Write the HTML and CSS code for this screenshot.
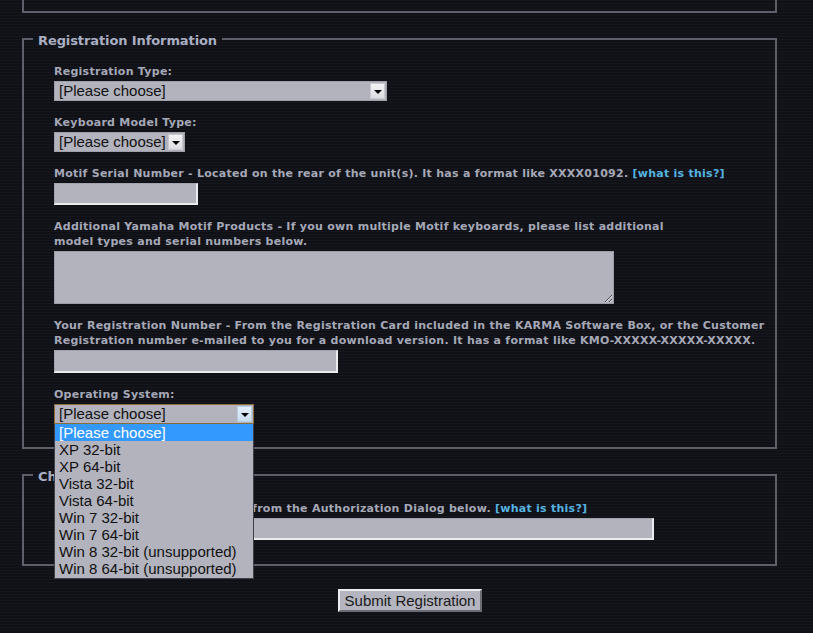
FILE: index.html
```html
<!DOCTYPE html>
<html>
<head>
<meta charset="utf-8">
<title>Registration</title>
<link rel="stylesheet" href="styles.css">
</head>
<body>
<div class="page">
  <div class="top-box"></div>

  <fieldset class="box reg">
    <legend>Registration Information</legend>
    <div class="box-body">
      <div class="field">
        <div class="label">Registration Type:</div>
        <div class="select w-reg"><span class="sel-text">[Please choose]</span><span class="arrow"></span></div>
      </div>
      <div class="field">
        <div class="label">Keyboard Model Type:</div>
        <div class="select w-kbd"><span class="sel-text">[Please choose]</span><span class="arrow"></span></div>
      </div>
      <div class="field">
        <div class="label">Motif Serial Number - Located on the rear of the unit(s). It has a format like XXXX01092. <a class="help" href="#">[what is this?]</a></div>
        <input class="text w-serial" type="text">
      </div>
      <div class="field">
        <div class="label">Additional Yamaha Motif Products - If you own multiple Motif keyboards, please list additional<br>model types and serial numbers below.</div>
        <textarea class="area"></textarea>
      </div>
      <div class="field">
        <div class="label">Your Registration Number - From the Registration Card included in the KARMA Software Box, or the Customer<br>Registration number e-mailed to you for a download version. It has a format like KMO-XXXXX-XXXXX-XXXXX.</div>
        <input class="text w-regnum" type="text">
      </div>
      <div class="field os">
        <div class="label">Operating System:</div>
        <div class="select focused w-os"><span class="sel-text">[Please choose]</span><span class="arrow"></span></div>
        <ul class="dropdown">
          <li class="selected">[Please choose]</li>
          <li>XP 32-bit</li>
          <li>XP 64-bit</li>
          <li>Vista 32-bit</li>
          <li>Vista 64-bit</li>
          <li>Win 7 32-bit</li>
          <li>Win 7 64-bit</li>
          <li>Win 8 32-bit (unsupported)</li>
          <li>Win 8 64-bit (unsupported)</li>
        </ul>
      </div>
    </div>
  </fieldset>

  <fieldset class="box chal">
    <legend>Challenge Code</legend>
    <div class="box-body">
      <div class="field">
        <div class="label">Challenge Code - Enter a code from the Authorization Dialog below. <a class="help" href="#">[what is this?]</a></div>
        <input class="text w-chal" type="text">
      </div>
    </div>
  </fieldset>

  <div class="submit-row">
    <button class="submit" type="button">Submit Registration</button>
  </div>
</div>
</body>
</html>
```

FILE: styles.css
```css
html, body {
  margin: 0;
  padding: 0;
}

body {
  width: 813px;
  height: 633px;
  overflow: hidden;
  background-color: #111217;
  background-image: repeating-linear-gradient(to bottom, #16171c 0, #16171c 1px, #101116 1px, #101116 3px);
  font-family: "DejaVu Sans", Verdana, sans-serif;
  color: #a5a8b6;
}

.page {
  width: 755px;
  margin-left: 22px;
}

.top-box {
  height: 11px;
  border: 2px solid #5d5f6b;
  border-top: none;
}

.box {
  margin: 16px 0 0;
  padding: 0;
  min-width: 0;
  border: 2px solid #5d5f6b;
}

.box.chal {
  margin-top: 16px;
}

.box legend {
  margin-left: 9px;
  padding: 4px 5px 0;
  font-size: 13px;
  line-height: 16px;
  font-weight: bold;
  color: #a9aec2;
  letter-spacing: -0.1px;
}

.box-body {
  padding: 15px 0 23px 30px;
}

.chal .box-body {
  padding-top: 16px;
  padding-bottom: 24px;
}

.field {
  margin-bottom: 14px;
}

.field:last-child {
  margin-bottom: 0;
}

.label {
  font-size: 11px;
  line-height: 15px;
  font-weight: bold;
  letter-spacing: 0.26px;
  margin-bottom: 2px;
  white-space: nowrap;
}

.help {
  color: #55b3e0;
  text-decoration: none;
}

/* select look-alike */
.select {
  box-sizing: border-box;
  height: 20px;
  display: flex;
  align-items: center;
  justify-content: space-between;
  background: #b2b3bd;
  border: 1px solid #9fa0aa;
  font-family: "Liberation Sans", Arial, sans-serif;
  font-size: 15px;
  color: #111;
}

.sel-text {
  padding-left: 4px;
  line-height: 18px;
}

.arrow {
  box-sizing: border-box;
  width: 15px;
  height: 16px;
  margin-right: 1px;
  background: linear-gradient(#f4f4f6, #dcdce2);
  border: 1px solid #c8c8ce;
  display: flex;
  align-items: center;
  justify-content: center;
}

.arrow::after {
  content: "";
  width: 0;
  height: 0;
  border-left: 4px solid transparent;
  border-right: 4px solid transparent;
  border-top: 4px solid #000;
  margin-top: 1px;
}

.w-reg { width: 333px; }
.w-kbd { width: 131px; }
.w-os { width: 200px; }

.select.focused {
  border-color: #8a6c3a;
}

.select.focused .arrow {
  background: linear-gradient(#e4effa, #c9dcef);
  border-color: #b6cce0;
}

/* text inputs */
.text {
  display: block;
  box-sizing: border-box;
  margin: 0;
  height: 22px;
  background: #b2b3bd;
  border-style: solid;
  border-width: 1px 2px 2px 1px;
  border-color: #a2a3ad #ebebee #ebebee #a2a3ad;
  padding: 0 3px;
}

.w-serial { width: 144px; }
.w-regnum { width: 284px; height: 23px; }
.w-chal { width: 600px; }

.area {
  display: block;
  box-sizing: border-box;
  margin: 0;
  width: 560px;
  height: 53px;
  background: #b2b3bd;
  border: 1px solid #9c9da7;
  resize: both;
}

/* open dropdown */
.os {
  position: relative;
}

.dropdown {
  position: absolute;
  left: 0;
  top: 100%;
  z-index: 10;
  box-sizing: border-box;
  width: 200px;
  margin: 0;
  padding: 0 0 1px;
  list-style: none;
  background: #b2b3bd;
  border: 1px solid #3e3f47;
  border-top: none;
  font-family: "Liberation Sans", Arial, sans-serif;
  font-size: 15px;
  color: #111;
}

.dropdown li {
  height: 17px;
  line-height: 17px;
  padding-left: 4px;
  white-space: nowrap;
}

.dropdown li.selected {
  background: #3399ff;
  color: #fff;
}

.submit-row {
  margin-top: 23px;
  padding-left: 316px;
}

.submit {
  box-sizing: border-box;
  width: 144px;
  height: 23px;
  margin: 0;
  padding: 0;
  background: #b4b5bf;
  border-style: solid;
  border-width: 2px;
  border-color: #ececf0 #6a6b73 #6a6b73 #ececf0;
  font-family: "Liberation Sans", Arial, sans-serif;
  font-size: 15px;
  color: #1a1a1a;
}
```
